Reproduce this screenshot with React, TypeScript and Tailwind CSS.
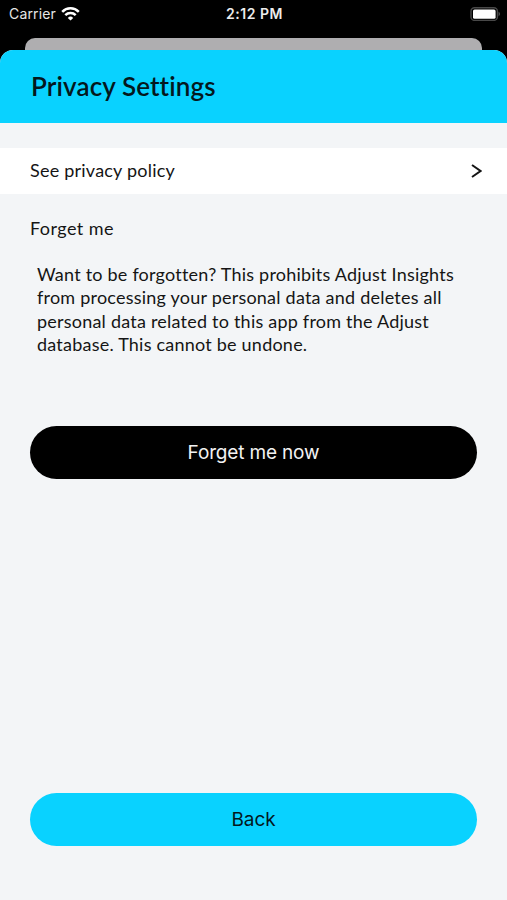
import type { ReactNode } from 'react';

const WifiIcon = () => (
  <svg className="ml-[5px] h-[14px] w-[19px]" viewBox="0 0 19 14" fill="none" stroke="white" strokeWidth="2.5">
    <path d="M1.2 4.800a11.700 11.700 0 0 1 16.600 0" />
    <path d="M4.300 8.200a7.400 7.400 0 0 1 10.400 0" />
    <path d="M9.500 13.600L6.800 10.900a3.900 3.900 0 0 1 5.400 0z" fill="white" stroke="none" />
  </svg>
);

const BatteryIcon = () => (
  <svg className="h-[14px] w-[31px]" viewBox="0 0 31 14" fill="none">
    <rect x="1" y="0.8" width="26.400" height="12.600" rx="3.500" stroke="#484848" strokeWidth="1.400" />
    <rect x="3" y="2.4" width="22.600" height="9.400" rx="1.600" fill="white" />
    <path d="M28.500 4.800v4.400c1-.4 1.600-1.200 1.600-2.200s-.6-1.800-1.600-2.200z" fill="#484848" />
  </svg>
);

const StatusBar = () => (
  <div className="grid h-[28px] grid-cols-3 items-center pl-[9px] pr-[6px] text-[14px] text-white">
    <div className="flex items-center pb-px">
      <span className="tracking-[0.15px] text-[#e6e6e6]">Carrier</span>
      <WifiIcon />
    </div>
    <span className="pr-px pb-px text-center font-semibold tracking-[0.5px] text-[#ececec]">2:12 PM</span>
    <div className="flex justify-end pb-px">
      <BatteryIcon />
    </div>
  </div>
);

interface PillButtonProps {
  className: string;
  children: ReactNode;
}

const PillButton = ({ className, children }: PillButtonProps) => (
  <button
    className={`mx-[30px] flex h-[53px] items-center justify-center rounded-full pt-0.5 font-['Inter',sans-serif] text-[19px] ${className}`}
  >
    {children}
  </button>
);

export default function App() {
  return (
    <div className="flex h-[900px] w-[507px] flex-col overflow-hidden bg-black font-['Inter',sans-serif]">
      <StatusBar />
      <div className="mx-[25px] mt-[10px] h-[12px] shrink-0 rounded-t-[10px] bg-[#afaeb0]" />
      <main className="flex flex-1 flex-col overflow-hidden rounded-t-[13px] bg-[#f3f5f7] font-['Lato',sans-serif] text-[#151515]">
        <header className="flex h-[73px] items-center bg-[#09d2ff] px-[31px] pb-px">
          <h1 className="text-[26px] font-semibold tracking-[0.120px] text-[#04181d]">Privacy Settings</h1>
        </header>
        <button className="mt-[25px] flex h-[46px] items-center justify-between bg-white pl-[30px] pr-[25px] text-[18px] tracking-[0.220px]">
          <span className="pb-0.5">See privacy policy</span>
          <svg className="h-[14px] w-[11px]" viewBox="0 0 11 14" fill="none" stroke="currentColor" strokeWidth="2">
            <path d="M1 1l8.500 6L1 13" />
          </svg>
        </button>
        <h2 className="mt-[22px] px-[30px] text-[18px] leading-[24px] tracking-[0.450px]">Forget me</h2>
        <p className="mt-[23px] px-[37px] text-[18px] leading-[23.400px] tracking-[0.220px]">
          Want to be forgotten? This prohibits Adjust Insights
          <br />
          from processing your personal data and deletes all
          <br />
          personal data related to this app from the Adjust
          <br />
          database. This cannot be undone.
        </p>
        <PillButton className="mt-auto bg-black tracking-[-0.160px] text-[#f2f2f2]">Forget me now</PillButton>
        <PillButton className="mt-[314px] mb-[54px] bg-[#09d2ff] tracking-[-0.100px] text-[#04181d]">Back</PillButton>
      </main>
    </div>
  );
}
